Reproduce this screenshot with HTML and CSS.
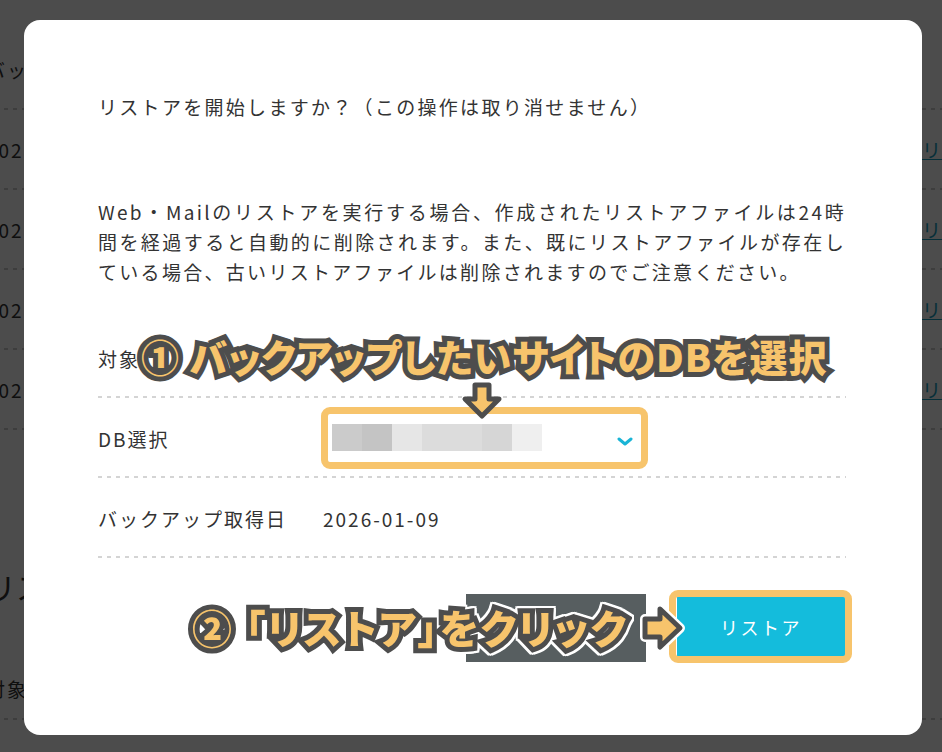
FILE: index.html
```html
<!DOCTYPE html>
<html lang="ja">
<head>
    <meta charset="UTF-8">
    <title>リストア</title>
    <link rel="stylesheet" href="styles.css">
</head>
<body>
    <!-- page behind the dialog -->
    <div class="page">
        <div class="list-row head"><span>バックアップ取得日</span><span></span></div>
        <div class="list-row"><span>2026-01-09</span><a href="#">リストア</a></div>
        <div class="list-row"><span>2026-01-08</span><a href="#">リストア</a></div>
        <div class="list-row"><span>2026-01-07</span><a href="#">リストア</a></div>
        <div class="list-row"><span>2026-01-06</span><a href="#">リストア</a></div>
        <h2 class="page-title">リストア履歴</h2>
        <div class="list-row last"><span>対象</span><span></span></div>
    </div>

    <!-- dialog -->
    <div class="overlay">
        <div class="modal">
            <p class="confirm">リストアを開始しますか？（この操作は取り消せません）</p>
            <p class="notice">
                <span class="line full">Web・Mailのリストアを実行する場合、作成されたリストアファイルは24時</span>
                <span class="line full">間を経過すると自動的に削除されます。また、既にリストアファイルが存在し</span>
                <span class="line">ている場合、古いリストアファイルは削除されますのでご注意ください。</span>
            </p>

            <div class="detail">
                <div class="detail-row">
                    <div class="label">対象</div>
                    <div class="value"></div>
                </div>
                <div class="detail-row">
                    <div class="label">DB選択</div>
                    <div class="value">
                        <div class="select highlight">
                            <div class="mosaic">
                                <span class="m1"></span><span class="m2"></span><span class="m3"></span><span class="m4"></span><span class="m5"></span><span class="m6"></span>
                            </div>
                            <svg class="chevron" width="16" height="9" viewBox="0 0 16 9"><polyline points="2,2 8,7 14,2" fill="none" stroke="#19b4d6" stroke-width="3" stroke-linecap="round" stroke-linejoin="round"/></svg>
                        </div>
                    </div>
                </div>
                <div class="detail-row">
                    <div class="label">バックアップ取得日</div>
                    <div class="value">2026-01-09</div>
                </div>
            </div>

            <div class="actions">
                <button class="restore highlight">リストア</button>
            </div>

            <!-- annotations -->
            <div class="note note-1">① バックアップしたいサイトのDBを選択</div>
            <svg class="arrow-down" width="44" height="40" viewBox="0 0 44 40">
                <path d="M15 4 H29 V18 H39 L22 35 L5 18 H15 Z" fill="#f7c46c" stroke="#4d4d4d" stroke-width="5" stroke-linejoin="round"/>
            </svg>
            <div class="patch"></div>
            <div class="note note-2">② 「リストア」をクリック</div>
            <svg class="arrow-right" width="46" height="50" viewBox="0 0 46 50">
                <path d="M5 16 H20 V6 L40 25 L20 44 V34 H5 Z" fill="none" stroke="#fff" stroke-width="10" stroke-linejoin="round"/>
                <path d="M5 16 H20 V6 L40 25 L20 44 V34 H5 Z" fill="#f7c46c" stroke="#4d4d4d" stroke-width="5" stroke-linejoin="round"/>
            </svg>
        </div>
    </div>
</body>
</html>
```

FILE: styles.css
```css
body { margin: 0; font-family: "Noto Sans CJK JP", sans-serif; color: #333; background: #fff; overflow: hidden; }

.page { margin-left: -14px; margin-right: -70px; padding-top: 30px; }
.list-row { display: flex; justify-content: space-between; align-items: center; height: 78px; font-size: 19px; letter-spacing: 2px; background: linear-gradient(to right, #ccc 50%, transparent 50%) bottom left / 9px 2px repeat-x; padding-bottom: 2px; }
.list-row a { color: #1a9fbf; width: 90px; }
.list-row.last { height: 60px; margin-top: 50px; }
.page-title { font-size: 30px; font-weight: 400; margin: 134px 0 0; }

.overlay { position: fixed; inset: 0; background: rgba(0, 0, 0, 0.7); padding: 20px 0 0 24px; }
.modal { position: relative; width: 898px; height: 715px; box-sizing: border-box; background: #fff; border-radius: 16px; padding: 72px 76px 0 74px; }

.confirm, .notice { margin: 0; font-size: 19px; line-height: 30px; letter-spacing: 2.3px; white-space: nowrap; }
.notice { margin-top: 75px; }
.notice .line { display: block; }
.notice .full { text-align: justify; text-align-last: justify; }

.detail { margin-top: 31px; }
.detail-row { display: grid; grid-template-columns: 225px 1fr; align-items: center; height: 76px; padding: 2px 0; font-size: 19px; letter-spacing: 2px; background: linear-gradient(to right, #d4d4d4 45%, transparent 45%) bottom left / 9px 2px repeat-x; }

.select { position: relative; display: flex; align-items: center; justify-content: space-between; width: 322px; height: 52px; box-sizing: border-box; padding: 0 12px 0 9px; border-bottom: 1px solid #eee; }
.mosaic { display: flex; height: 27px; }
.mosaic span { width: 30px; }
.mosaic .m1 { background: #cbcbcb; }
.mosaic .m2 { background: #c4c4c4; }
.mosaic .m3 { background: #e6e6e6; }
.mosaic .m4 { background: #dcdcdc; width: 60px; }
.mosaic .m5 { background: #d6d6d6; }
.mosaic .m6 { background: #efefef; }
.chevron { margin-top: 8px; }

.highlight::after { content: ""; position: absolute; border: 7px solid #f7c46c; border-radius: 9px; pointer-events: none; }
.select.highlight::after { top: -5px; bottom: -6px; left: -2px; right: -3px; }

.actions { display: flex; justify-content: flex-end; margin-top: 39px; }
.restore { position: relative; width: 168px; height: 59px; border: 0; background: #14bcdc; color: #fff; font-family: inherit; font-size: 18px; letter-spacing: 2.5px; margin-right: 1px; }
.restore.highlight::after { top: -7px; bottom: -7px; left: -8px; right: -7px; }

.note { position: absolute; font-weight: 900; color: #f7c46c; line-height: 1; white-space: nowrap; -webkit-text-stroke: 10px #4d4d4d; paint-order: stroke fill; font-feature-settings: "palt"; }
.note-1 { left: 117px; top: 317px; font-size: 38px; letter-spacing: 1px; }
.note-2 { left: 168px; top: 587px; font-size: 40px; letter-spacing: 2px; filter: drop-shadow(2px 0 0 #fff) drop-shadow(-2px 0 0 #fff) drop-shadow(0 2px 0 #fff) drop-shadow(0 -2px 0 #fff); }
.patch { position: absolute; left: 442px; top: 574px; width: 180px; height: 68px; background: #575e60; }
.arrow-down { position: absolute; left: 436px; top: 361px; }
.arrow-right { position: absolute; left: 616px; top: 583px; }
```
